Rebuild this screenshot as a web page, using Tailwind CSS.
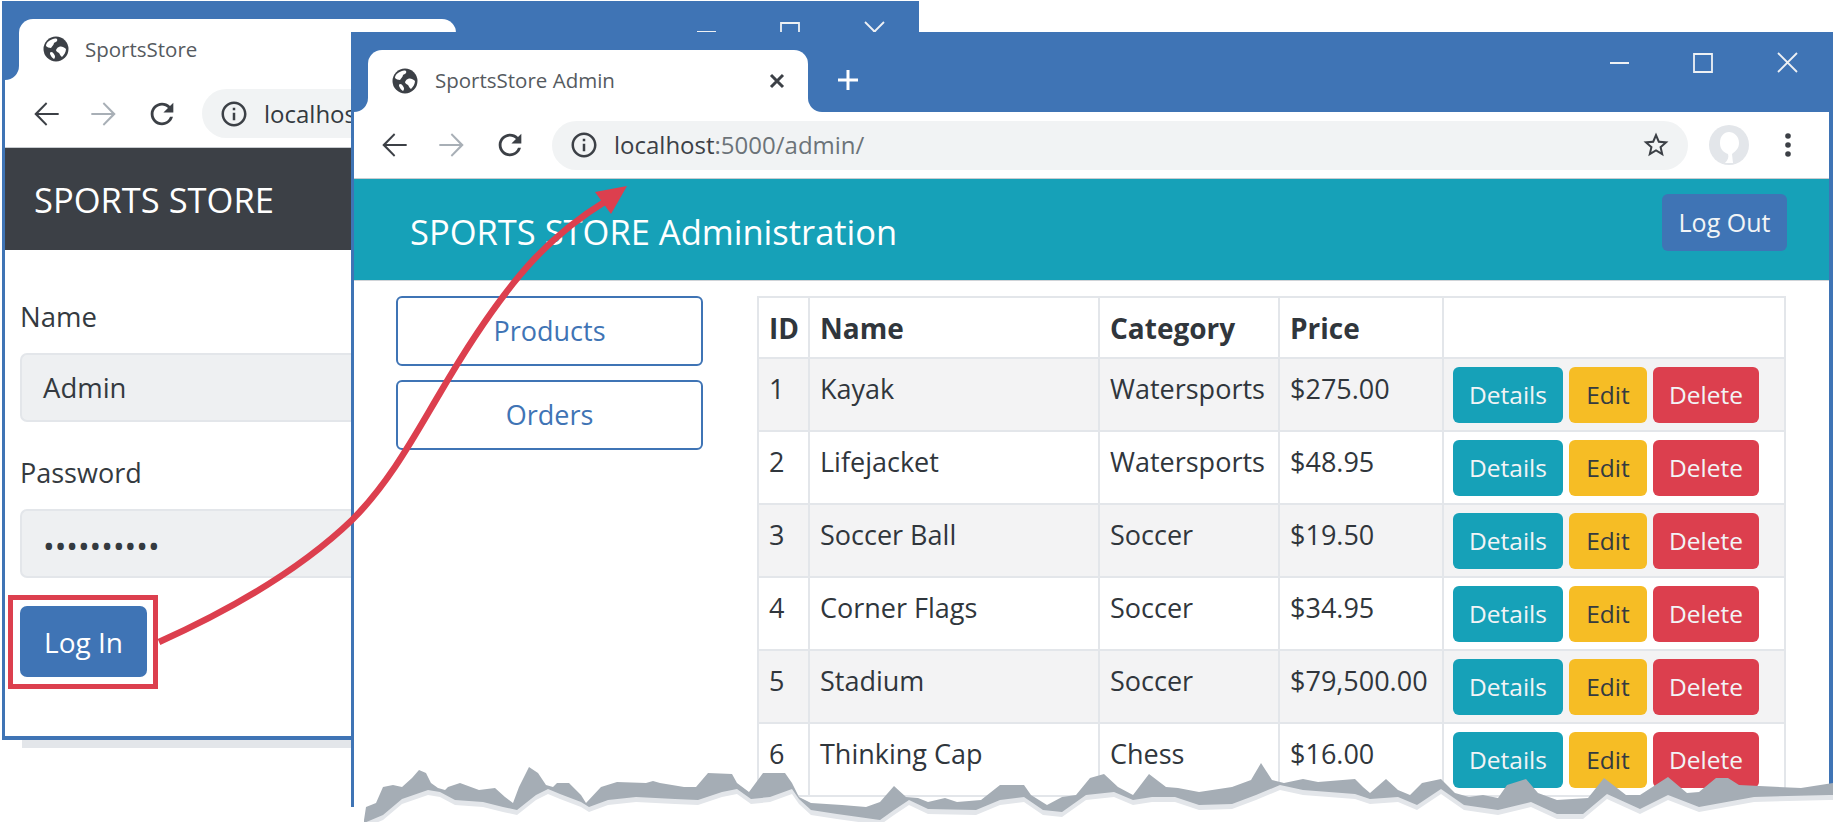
<!DOCTYPE html>
<html lang="en">
<head>
  <meta charset="UTF-8" />
  <title>SportsStore</title>
  <script src="https://cdn.jsdelivr.net/npm/@tailwindcss/browser@4"></script>
</head>
<body class="bg-white font-['Open_Sans',sans-serif] text-[#343a40]">
  <svg class="hidden">
    <symbol id="globe" viewBox="0 0 26 26">
      <circle cx="13" cy="13" r="12.5" fill="#3c4046" />
      <path d="M6 5c3-2 6-3 8-2 1 2-1 3-3 4 0 2-2 3-3 5-2 0-4-1-5-2 0-2 1-4 3-5zM16 11c2-1 5 0 7 2 0 3-2 6-4 8-2-1-2-3-3-4-2-1-3-2-3-3 1-2 2-3 3-3zM8 16c2 0 3 2 4 4 0 1 0 2-1 3-2-1-3-3-4-5 0-1 0-2 1-2z" fill="#fff" />
    </symbol>
    <symbol id="arrow" viewBox="0 0 24 24"><path d="M20 11.3H7.2l5.6-5.8L12 4.6l-7.4 7.4 7.4 7.4.8-.9-5.6-5.8H20v-1.4z" /></symbol>
    <symbol id="reload" viewBox="0 0 24 24"><path d="M17.65 6.35A7.958 7.958 0 0 0 12 4c-4.42 0-7.99 3.58-7.99 8s3.57 8 7.99 8c3.73 0 6.84-2.55 7.73-6h-2.08A5.99 5.99 0 0 1 12 18c-3.31 0-6-2.69-6-6s2.69-6 6-6c1.66 0 3.14.69 4.22 1.78L13 11h7V4l-2.35 2.35z" /></symbol>
    <symbol id="info" viewBox="0 0 24 24"><path d="M11 7h2v2h-2zm0 4h2v6h-2zm1-9C6.48 2 2 6.48 2 12s4.48 10 10 10 10-4.48 10-10S17.52 2 12 2zm0 18c-4.41 0-8-3.59-8-8s3.59-8 8-8 8 3.59 8 8-3.59 8-8 8z" /></symbol>
    <symbol id="star" viewBox="0 0 24 24"><path d="M22 9.24l-7.19-.62L12 2 9.19 8.63 2 9.24l5.46 4.73L5.82 21 12 17.27 18.18 21l-1.63-7.03L22 9.24zM12 15.4l-3.76 2.27 1-4.28-3.32-2.88 4.38-.38L12 6.1l1.71 4.04 4.38.38-3.32 2.88 1 4.28L12 15.4z" /></symbol>
    <symbol id="controls" viewBox="0 0 252 60">
      <path d="M33 31h19M117 22h18v18h-18zM201 21l19 19M220 21l-19 19" fill="none" stroke="#eef1f4" stroke-width="1.8" />
    </symbol>
  </svg>

  <div class="relative w-[1833px] h-[822px] overflow-hidden">

    <!-- back window: login -->
    <div class="absolute left-[2px] top-[1px] w-[917px] h-[739px] flex flex-col bg-white">
      <div class="flex h-[79px] shrink-0 bg-[#3f74b5]">
        <div class="w-[3px]"></div>
        <div class="w-[14px] h-[14px] self-end bg-white"><div class="h-full bg-[#3f74b5] rounded-br-[14px]"></div></div>
        <div class="mt-[18px] w-[437px] bg-white rounded-t-[14px] flex items-center pl-[24px] pb-[1px]">
          <svg class="w-[26px] h-[26px]"><use href="#globe" /></svg>
          <span class="ml-[16px] text-[20.5px] text-[#555a60]">SportsStore</span>
        </div>
        <svg class="ml-auto mr-[3px] w-[252px] h-[60px]"><use href="#controls" /></svg>
      </div>
      <div class="flex-1 flex flex-col border-x-[3px] border-b-[4px] border-[#3f74b5]">
        <div class="h-[68px] shrink-0 flex items-center border-b border-[#c8ccd0]">
          <svg class="ml-[22px] w-[38px] h-[38px] fill-[#3c4046]"><use href="#arrow" /></svg>
          <svg class="ml-[20px] w-[38px] h-[38px] rotate-180 fill-[#a8afb6]"><use href="#arrow" /></svg>
          <svg class="ml-[22px] w-[34px] h-[34px] fill-[#3c4046]"><use href="#reload" /></svg>
          <div class="ml-[23px] flex-1 h-[49px] rounded-l-full bg-[#f1f3f4] flex items-center pl-[17px]">
            <svg class="w-[30px] h-[30px] fill-[#3c4046]"><use href="#info" /></svg>
            <span class="ml-[15px] text-[24px] text-[#343a40]">localhost:5000/</span>
          </div>
        </div>
        <div class="h-[102px] shrink-0 bg-[#3c4046] flex items-center pl-[29px] pt-[2px] text-[34.5px] text-white">SPORTS STORE</div>
        <div class="pl-[15px] pr-0 pt-[49px]">
          <div class="text-[27.5px] leading-[36px]">Name</div>
          <div class="mt-[18px] h-[69px] rounded-l-[7px] bg-[#eef0f2] border-2 border-r-0 border-[#e3e6ea] flex items-center pl-[21px] text-[27.5px]">Admin</div>
          <div class="mt-[33px] text-[27px] leading-[36px]">Password</div>
          <div class="mt-[18px] h-[69px] rounded-l-[7px] bg-[#eef0f2] border-2 border-r-0 border-[#e3e6ea] flex items-center pl-[21px] pt-[6px] text-[31px]">••••••••••</div>
          <button class="mt-[28px] w-[127px] h-[71px] rounded-[7px] bg-[#3f74b5] text-white text-[28px]">Log In</button>
        </div>
      </div>
    </div>
    <div class="absolute left-[22px] top-[740px] w-[330px] h-[8px] bg-[#e3e6ea]"></div>
    <div class="absolute left-[8px] top-[595px] w-[150px] h-[94px] border-[5px] border-[#dc3f4e]"></div>

    <!-- front window: admin -->
    <div class="absolute left-[351px] top-[32px] w-[1482px] h-[775px] flex flex-col bg-white border-l-[3px] border-r-[4px] border-[#3f74b5]">
      <div class="flex h-[80px] shrink-0 bg-[#3f74b5]">
        <div class="w-[14px] h-[14px] self-end bg-white"><div class="h-full bg-[#3f74b5] rounded-br-[14px]"></div></div>
        <div class="mt-[18px] w-[440px] bg-white rounded-t-[14px] flex items-center pl-[24px] pb-[1px]">
          <svg class="w-[26px] h-[26px]"><use href="#globe" /></svg>
          <span class="ml-[17px] text-[20.5px] text-[#555a60]">SportsStore Admin</span>
          <svg class="ml-auto mr-[22px] w-[18px] h-[18px]" viewBox="0 0 18 18"><path d="M3 3l12 12M15 3L3 15" stroke="#3c4046" stroke-width="3" /></svg>
        </div>
        <div class="w-[14px] h-[14px] self-end bg-white"><div class="h-full bg-[#3f74b5] rounded-bl-[14px]"></div></div>
        <svg class="ml-[15px] mt-[37px] w-[22px] h-[22px]" viewBox="0 0 22 22"><path d="M11 1v20M1 11h20" stroke="#fff" stroke-width="3" /></svg>
        <svg class="ml-auto w-[252px] h-[60px]"><use href="#controls" /></svg>
      </div>
      <div class="h-[67px] shrink-0 flex items-center border-b border-[#c8ccd0]">
        <svg class="ml-[21px] w-[38px] h-[38px] fill-[#3c4046]"><use href="#arrow" /></svg>
        <svg class="ml-[20px] w-[38px] h-[38px] rotate-180 fill-[#a8afb6]"><use href="#arrow" /></svg>
        <svg class="ml-[22px] w-[34px] h-[34px] fill-[#3c4046]"><use href="#reload" /></svg>
        <div class="ml-[25px] w-[1136px] h-[49px] rounded-full bg-[#f1f3f4] flex items-center pl-[17px] pr-[17px]">
          <svg class="w-[30px] h-[30px] fill-[#3c4046]"><use href="#info" /></svg>
          <span class="ml-[15px] text-[24px] text-[#3c4046]">localhost<span class="text-[#6c7379]">:5000/admin/</span></span>
          <svg class="ml-auto w-[30px] h-[30px] fill-[#3c4046]"><use href="#star" /></svg>
        </div>
        <svg class="ml-[21px] w-[40px] h-[40px]" viewBox="0 0 40 40">
          <circle cx="20" cy="20" r="20" fill="#e3e6ea" />
          <path d="M11 18c0-7 4-11 9-11s10 4 10 11c0 5-3 8-7 11l1 9h-8c3-3 4-6 3-9-5-2-8-5-8-11z" fill="#fff" />
        </svg>
        <svg class="ml-[35px] w-[8px] h-[28px]" viewBox="0 0 8 28"><circle cx="4" cy="5" r="2.8" fill="#3c4046" /><circle cx="4" cy="14" r="2.8" fill="#3c4046" /><circle cx="4" cy="23" r="2.8" fill="#3c4046" /></svg>
      </div>
      <div class="h-[102px] shrink-0 bg-[#16a1b8] flex justify-between border-b border-[#d0d4d8]">
        <span class="ml-[56px] mt-[32px] text-[34.5px] leading-[42px] text-white">SPORTS STORE Administration</span>
        <button class="mt-[15px] mr-[42px] w-[125px] h-[57px] rounded-[6px] bg-[#3f74b5] text-[#f2f4f6] text-[25px]">Log Out</button>
      </div>
      <div class="flex pl-[42px] pt-[15px]">
        <div class="w-[307px] shrink-0 flex flex-col gap-[14px]">
          <button class="h-[70px] rounded-[6px] border-2 border-[#3f74b5] text-[#3f74b5] text-[27px]">Products</button>
          <button class="h-[70px] rounded-[6px] border-2 border-[#3f74b5] text-[#3f74b5] text-[27px]">Orders</button>
        </div>
        <table class="ml-[54px] w-[1027px] table-fixed border-collapse text-[27px] text-[#30363c]">
          <colgroup><col class="w-[51px]" /><col class="w-[290px]" /><col class="w-[180px]" /><col class="w-[164px]" /><col class="w-[342px]" /></colgroup>
          <thead>
            <tr class="h-[61px] text-left font-bold text-[28px]">
              <th class="border-2 border-[#e3e6ea] px-[10px]">ID</th>
              <th class="border-2 border-[#e3e6ea] px-[10px]">Name</th>
              <th class="border-2 border-[#e3e6ea] px-[10px]">Category</th>
              <th class="border-2 border-[#e3e6ea] px-[10px]">Price</th>
              <th class="border-2 border-[#e3e6ea]"></th>
            </tr>
          </thead>
          <tbody>
            <tr class="h-[73px] bg-[#f3f3f4]">
              <td class="border-2 border-[#e3e6ea] px-[10px] pt-[12px] align-top leading-[36px]">1</td>
              <td class="border-2 border-[#e3e6ea] px-[10px] pt-[12px] align-top leading-[36px]">Kayak</td>
              <td class="border-2 border-[#e3e6ea] px-[10px] pt-[12px] align-top leading-[36px]">Watersports</td>
              <td class="border-2 border-[#e3e6ea] px-[10px] pt-[12px] align-top leading-[36px]">$275.00</td>
              <td class="border-2 border-[#e3e6ea] px-[9px]"><div class="flex gap-[6px] text-[24.5px]"><button class="w-[110px] h-[56px] pt-[2px] rounded-[6px] bg-[#16a1b8] text-[#f2f4f6]">Details</button><button class="w-[78px] h-[56px] pt-[2px] rounded-[6px] bg-[#f6bd25] text-[#343a40]">Edit</button><button class="w-[106px] h-[56px] pt-[2px] rounded-[6px] bg-[#dc3f4e] text-[#f2f4f6]">Delete</button></div></td>
            </tr>
            <tr class="h-[73px]">
              <td class="border-2 border-[#e3e6ea] px-[10px] pt-[12px] align-top leading-[36px]">2</td>
              <td class="border-2 border-[#e3e6ea] px-[10px] pt-[12px] align-top leading-[36px]">Lifejacket</td>
              <td class="border-2 border-[#e3e6ea] px-[10px] pt-[12px] align-top leading-[36px]">Watersports</td>
              <td class="border-2 border-[#e3e6ea] px-[10px] pt-[12px] align-top leading-[36px]">$48.95</td>
              <td class="border-2 border-[#e3e6ea] px-[9px]"><div class="flex gap-[6px] text-[24.5px]"><button class="w-[110px] h-[56px] pt-[2px] rounded-[6px] bg-[#16a1b8] text-[#f2f4f6]">Details</button><button class="w-[78px] h-[56px] pt-[2px] rounded-[6px] bg-[#f6bd25] text-[#343a40]">Edit</button><button class="w-[106px] h-[56px] pt-[2px] rounded-[6px] bg-[#dc3f4e] text-[#f2f4f6]">Delete</button></div></td>
            </tr>
            <tr class="h-[73px] bg-[#f3f3f4]">
              <td class="border-2 border-[#e3e6ea] px-[10px] pt-[12px] align-top leading-[36px]">3</td>
              <td class="border-2 border-[#e3e6ea] px-[10px] pt-[12px] align-top leading-[36px]">Soccer Ball</td>
              <td class="border-2 border-[#e3e6ea] px-[10px] pt-[12px] align-top leading-[36px]">Soccer</td>
              <td class="border-2 border-[#e3e6ea] px-[10px] pt-[12px] align-top leading-[36px]">$19.50</td>
              <td class="border-2 border-[#e3e6ea] px-[9px]"><div class="flex gap-[6px] text-[24.5px]"><button class="w-[110px] h-[56px] pt-[2px] rounded-[6px] bg-[#16a1b8] text-[#f2f4f6]">Details</button><button class="w-[78px] h-[56px] pt-[2px] rounded-[6px] bg-[#f6bd25] text-[#343a40]">Edit</button><button class="w-[106px] h-[56px] pt-[2px] rounded-[6px] bg-[#dc3f4e] text-[#f2f4f6]">Delete</button></div></td>
            </tr>
            <tr class="h-[73px]">
              <td class="border-2 border-[#e3e6ea] px-[10px] pt-[12px] align-top leading-[36px]">4</td>
              <td class="border-2 border-[#e3e6ea] px-[10px] pt-[12px] align-top leading-[36px]">Corner Flags</td>
              <td class="border-2 border-[#e3e6ea] px-[10px] pt-[12px] align-top leading-[36px]">Soccer</td>
              <td class="border-2 border-[#e3e6ea] px-[10px] pt-[12px] align-top leading-[36px]">$34.95</td>
              <td class="border-2 border-[#e3e6ea] px-[9px]"><div class="flex gap-[6px] text-[24.5px]"><button class="w-[110px] h-[56px] pt-[2px] rounded-[6px] bg-[#16a1b8] text-[#f2f4f6]">Details</button><button class="w-[78px] h-[56px] pt-[2px] rounded-[6px] bg-[#f6bd25] text-[#343a40]">Edit</button><button class="w-[106px] h-[56px] pt-[2px] rounded-[6px] bg-[#dc3f4e] text-[#f2f4f6]">Delete</button></div></td>
            </tr>
            <tr class="h-[73px] bg-[#f3f3f4]">
              <td class="border-2 border-[#e3e6ea] px-[10px] pt-[12px] align-top leading-[36px]">5</td>
              <td class="border-2 border-[#e3e6ea] px-[10px] pt-[12px] align-top leading-[36px]">Stadium</td>
              <td class="border-2 border-[#e3e6ea] px-[10px] pt-[12px] align-top leading-[36px]">Soccer</td>
              <td class="border-2 border-[#e3e6ea] px-[10px] pt-[12px] align-top leading-[36px]">$79,500.00</td>
              <td class="border-2 border-[#e3e6ea] px-[9px]"><div class="flex gap-[6px] text-[24.5px]"><button class="w-[110px] h-[56px] pt-[2px] rounded-[6px] bg-[#16a1b8] text-[#f2f4f6]">Details</button><button class="w-[78px] h-[56px] pt-[2px] rounded-[6px] bg-[#f6bd25] text-[#343a40]">Edit</button><button class="w-[106px] h-[56px] pt-[2px] rounded-[6px] bg-[#dc3f4e] text-[#f2f4f6]">Delete</button></div></td>
            </tr>
            <tr class="h-[73px]">
              <td class="border-2 border-[#e3e6ea] px-[10px] pt-[12px] align-top leading-[36px]">6</td>
              <td class="border-2 border-[#e3e6ea] px-[10px] pt-[12px] align-top leading-[36px]">Thinking Cap</td>
              <td class="border-2 border-[#e3e6ea] px-[10px] pt-[12px] align-top leading-[36px]">Chess</td>
              <td class="border-2 border-[#e3e6ea] px-[10px] pt-[12px] align-top leading-[36px]">$16.00</td>
              <td class="border-2 border-[#e3e6ea] px-[9px]"><div class="flex gap-[6px] text-[24.5px]"><button class="w-[110px] h-[56px] pt-[2px] rounded-[6px] bg-[#16a1b8] text-[#f2f4f6]">Details</button><button class="w-[78px] h-[56px] pt-[2px] rounded-[6px] bg-[#f6bd25] text-[#343a40]">Edit</button><button class="w-[106px] h-[56px] pt-[2px] rounded-[6px] bg-[#dc3f4e] text-[#f2f4f6]">Delete</button></div></td>
            </tr>
          </tbody>
        </table>
      </div>
    </div>

    <!-- torn bottom edge and the red arrow lie over both windows -->
    <svg class="absolute left-0 top-0" width="1833" height="822" viewBox="0 0 1833 822">
      <defs>
        <clipPath id="torn">
          <polygon points="364,840 364,820 366,807 376,803 383,787 393,785 402,787 412,778 419,770 426,773 431,783 438,788 445,790 448,787 460,783 479,790 495,788 505,797 513,803 519,787 529,767 538,773 546,785 553,787 557,783 569,783 581,795 586,803 601,787 617,782 646,783 653,781 660,783 684,787 696,787 708,773 732,774 737,783 749,792 763,773 785,773 792,783 799,797 811,803 842,805 866,807 880,802 894,786 906,797 918,798 928,802 945,798 957,802 981,800 1000,785 1024,785 1031,795 1047,805 1062,797 1076,795 1090,778 1104,774 1118,787 1133,795 1149,774 1166,787 1178,788 1199,792 1232,787 1251,780 1261,763 1272,780 1284,783 1303,779 1318,782 1355,779 1363,787 1370,793 1386,779 1398,790 1410,795 1422,783 1441,779 1455,793 1469,797 1483,795 1498,798 1507,785 1526,779 1538,793 1557,800 1588,798 1604,778 1626,795 1640,795 1668,777 1687,793 1699,792 1716,778 1728,778 1739,785 1801,788 1840,782 1840,840" />
        </clipPath>
        <polygon id="under" points="355,840 364,821 383,813 402,797 428,788 440,790 455,798 483,800 503,805 517,808 536,793 548,787 560,792 581,800 589,805 608,798 636,795 675,797 698,798 722,790 737,787 751,797 770,795 792,787 799,797 811,808 837,812 880,818 894,808 909,798 928,807 976,808 1000,798 1024,795 1043,808 1062,810 1086,793 1114,790 1133,798 1152,795 1175,795 1199,803 1232,802 1256,793 1280,783 1303,788 1355,792 1370,797 1398,795 1417,803 1441,787 1464,803 1498,808 1531,800 1557,812 1583,812 1607,792 1640,807 1668,793 1699,805 1754,795 1829,793 1840,793 1840,840" />
      </defs>
      <g clip-path="url(#torn)">
        <rect x="355" y="750" width="1485" height="90" fill="#a5adb5" />
        <use href="#under" y="2" fill="#e3e6ea" />
        <use href="#under" y="7" fill="#fff" />
      </g>
      <path d="M159 642C230 610 300 570 352 520C390 482 415 435 440 393C465 350 495 305 520 275C545 245 575 220 606 201" fill="none" stroke="#dc3f4e" stroke-width="6.5" />
      <path d="M627 186L595 192L611 214Z" fill="#dc3f4e" />
    </svg>
  </div>
</body>
</html>
